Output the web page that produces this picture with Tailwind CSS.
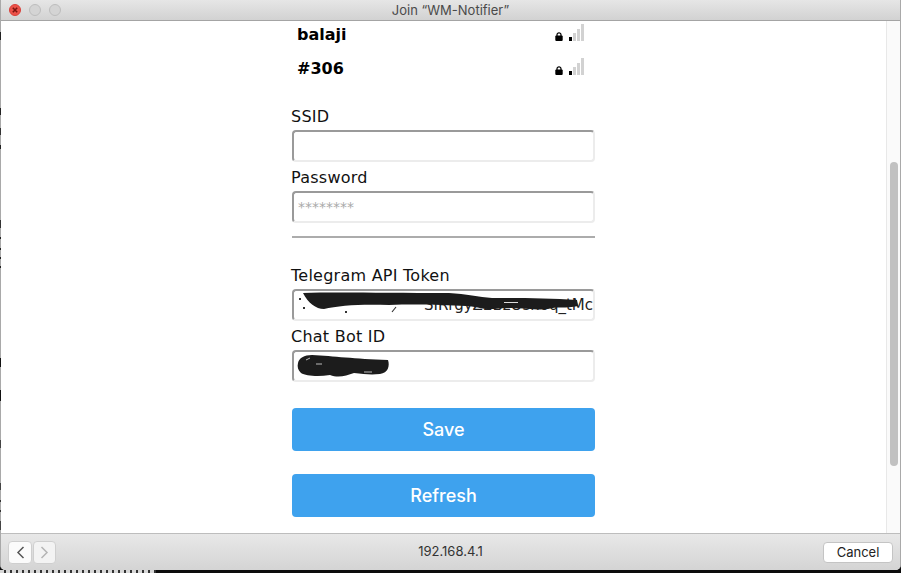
<!DOCTYPE html>
<html>
<head>
<meta charset="utf-8">
<script src="https://cdn.jsdelivr.net/npm/@tailwindcss/browser@4"></script>
</head>
<body class="m-0 bg-[#0c0c0c] overflow-hidden">
<div class="relative w-[901px] h-[573px] overflow-hidden font-['DejaVu_Sans',sans-serif] text-black">
  <div class="relative w-full h-[570px] flex flex-col bg-white rounded-b-[5px] overflow-hidden border-l border-r border-[#a9a9a9]">
    <header class="h-[21px] shrink-0 flex items-center relative bg-gradient-to-b from-[#e6e6e6] to-[#d2d2d2] border-b border-[#a4a4a4]">
      <div class="absolute left-[8px] top-[4px] flex gap-[8px]">
        <span class="w-[12px] h-[12px] rounded-full bg-[#ec5149] border border-[#d8403a] flex items-center justify-center">
          <svg width="6" height="6" viewBox="0 0 6 6"><path d="M0.8 0.8L5.2 5.2M5.2 0.8L0.8 5.2" stroke="#7a1410" stroke-width="1.6"/></svg>
        </span>
        <span class="w-[12px] h-[12px] rounded-full bg-[#d4d4d4] border border-[#bdbdbd]"></span>
        <span class="w-[12px] h-[12px] rounded-full bg-[#d4d4d4] border border-[#bdbdbd]"></span>
      </div>
      <div class="w-full text-center text-[13px] leading-[20px] text-[#4a4a4a] font-['Inter',sans-serif]">Join “WM-Notifier”</div>
    </header>
    <div class="flex-1 min-h-0 flex">
      <main class="flex-1 min-w-0">
        <div class="w-[303px] mx-auto mt-[-4px]">
          <div class="h-[34px] mt-px flex items-center justify-between pl-[5px] pr-[11px]">
            <span class="font-bold text-[16px]">balaji</span>
            <div class="flex items-end gap-[6px] mb-[5px]">
              <svg width="8" height="9" viewBox="0 0 8 9"><path d="M2 4V2.8a2 2 0 0 1 4 0V4" fill="none" stroke="#000" stroke-width="1.2"/><rect x="0.3" y="3.6" width="7.4" height="5.4" rx="1" fill="#000"/></svg>
              <svg width="15" height="17" viewBox="0 0 15 17"><rect x="0" y="13" width="3" height="4" fill="#000"/><rect x="4" y="9" width="3" height="8" fill="#d2d2d2"/><rect x="8" y="5" width="3" height="12" fill="#d2d2d2"/><rect x="12" y="0" width="3" height="17" fill="#d2d2d2"/></svg>
            </div>
          </div>
          <div class="h-[34px] flex items-center justify-between pl-[5px] pr-[11px]">
            <span class="font-bold text-[16px]">#306</span>
            <div class="flex items-end gap-[6px] mb-[5px]">
              <svg width="8" height="9" viewBox="0 0 8 9"><path d="M2 4V2.8a2 2 0 0 1 4 0V4" fill="none" stroke="#000" stroke-width="1.2"/><rect x="0.3" y="3.6" width="7.4" height="5.4" rx="1" fill="#000"/></svg>
              <svg width="15" height="17" viewBox="0 0 15 17"><rect x="0" y="13" width="3" height="4" fill="#000"/><rect x="4" y="9" width="3" height="8" fill="#d2d2d2"/><rect x="8" y="5" width="3" height="12" fill="#d2d2d2"/><rect x="12" y="0" width="3" height="17" fill="#d2d2d2"/></svg>
            </div>
          </div>
          <label class="block mt-[21px] -ml-px text-[16px] leading-[19px] tracking-[0.25px] text-[#111]">SSID</label>
          <div class="mt-[4px] h-[32px] rounded-[4px] border-2 border-[#ececec] border-t-[#9a9a9a] border-l-[#9a9a9a]"></div>
          <label class="block mt-[6px] -ml-px text-[16px] leading-[19px] tracking-[0.25px] text-[#111]">Password</label>
          <div class="mt-[4px] h-[32px] rounded-[4px] border-2 border-[#ececec] border-t-[#9a9a9a] border-l-[#9a9a9a] pl-[4px] flex items-center text-[14px] text-[#a9a9a9]">********</div>
          <div class="mt-[13px] h-[2px] bg-[#acacac]"></div>
          <label class="block mt-[28px] -ml-px text-[16px] leading-[19px] tracking-[0.25px] text-[#111]">Telegram API Token</label>
          <div class="relative mt-[4px] h-[32px] rounded-[4px] border-2 border-[#ececec] border-t-[#9a9a9a] border-l-[#9a9a9a] overflow-hidden flex items-center justify-end pr-0 text-[15px] text-[#222] whitespace-nowrap">SIRrgyZ2BzOsnoq_tMc
            <svg class="absolute left-0 top-0" width="299" height="28" viewBox="0 0 299 28"><path d="M9 2C40 1 90 2 155 2C172 3 185 6 198 7C225 7 255 7 283 9L284 15C272 18 262 15 254 18C240 20 225 15 200 18C190 19 180 15 172 15C150 14 125 13 95 14C70 13 45 14 30 18C22 18 14 12 9 2Z" fill="#1c1c1c"/><rect x="5" y="7" width="2" height="2" fill="#333"/><rect x="9" y="16" width="2" height="2" fill="#333"/><rect x="51" y="20" width="2" height="2" fill="#333"/><path d="M98 21L102 16" stroke="#333" stroke-width="1.2"/><rect x="210" y="11" width="14" height="1" fill="#ddd"/></svg>
          </div>
          <label class="block mt-[6px] -ml-px text-[16px] leading-[19px] tracking-[0.25px] text-[#111]">Chat Bot ID</label>
          <div class="relative mt-[4px] h-[32px] rounded-[4px] border-2 border-[#ececec] border-t-[#9a9a9a] border-l-[#9a9a9a] overflow-hidden">
            <svg class="absolute left-0 top-0" width="299" height="28" viewBox="0 0 299 28"><path d="M4 11C5 6 10 3 18 3C40 4 60 7 94 8C96 14 94 21 86 22C76 23 70 22 60 21C52 24 44 26 36 23C24 25 12 24 7 21C4 18 3 15 4 11Z" fill="#1c1c1c"/><path d="M12 8L16 6M22 12L28 12M70 20L78 20" stroke="#bbb" stroke-width="1"/></svg>
          </div>
          <button class="block w-full mt-[26px] h-[43px] rounded-[4px] bg-[#3ea2ee] text-white text-[18px] font-medium font-['Inter',sans-serif]">Save</button>
          <button class="block w-full mt-[23px] h-[43px] rounded-[4px] bg-[#3ea2ee] text-white text-[18px] font-medium font-['Inter',sans-serif]">Refresh</button>
        </div>
      </main>
      <aside class="w-[14px] shrink-0 bg-[#fafafa] border-l border-[#e8e8e8] pt-[141px] pl-[3px]">
        <div class="w-[8px] h-[304px] rounded-full bg-[#c1c1c1]"></div>
      </aside>
    </div>
    <footer class="h-[37px] shrink-0 flex items-center justify-between relative bg-gradient-to-b from-[#e8e8e8] to-[#d4d4d4] border-t border-[#bdbdbd] pl-[7px] pr-[7px]">
      <div class="flex gap-[1px]">
        <button class="w-[24px] h-[23px] rounded-[4px] bg-[#fbfbfb] border border-[#cfcfcf] flex items-center justify-center">
          <svg width="9" height="13" viewBox="0 0 9 13"><path d="M7.5 1L2 6.5L7.5 12" fill="none" stroke="#555" stroke-width="1.5"/></svg>
        </button>
        <button class="w-[23px] h-[23px] rounded-[4px] bg-[#f3f3f3] border border-[#cfcfcf] flex items-center justify-center">
          <svg width="9" height="13" viewBox="0 0 9 13"><path d="M1.5 1L7 6.5L1.5 12" fill="none" stroke="#b5b5b5" stroke-width="1.5"/></svg>
        </button>
      </div>
      <div class="absolute left-0 w-full text-center text-[13px] text-[#333] font-['Inter',sans-serif]">192.168.4.1</div>
      <button class="relative w-[70px] h-[21px] rounded-[4px] bg-white border border-[#c4c4c4] text-[13px] leading-[19px] text-[#222] font-['Inter',sans-serif]">Cancel</button>
    </footer>
  </div>
  <div class="absolute left-0 top-[32px] w-px h-[8px] bg-[#222]"></div>
  <div class="absolute left-0 top-[108px] w-px h-[7px] bg-[#222]"></div>
  <div class="absolute left-0 top-[128px] w-px h-[7px] bg-[#333]"></div>
  <div class="absolute left-0 top-[145px] w-px h-[4px] bg-[#222]"></div>
  <div class="absolute left-0 top-[220px] w-px h-[8px] bg-[#333]"></div>
  <div class="absolute left-0 top-[237px] w-px h-[2px] bg-[#222]"></div>
  <div class="absolute left-0 top-[248px] w-px h-[2px] bg-[#222]"></div>
  <div class="absolute left-0 top-[257px] w-px h-[2px] bg-[#222]"></div>
  <div class="absolute left-0 top-[266px] w-px h-[2px] bg-[#222]"></div>
  <div class="absolute left-0 top-[358px] w-px h-[9px] bg-[#111]"></div>
  <div class="absolute left-0 top-[390px] w-px h-[11px] bg-[#111]"></div>
  <div class="absolute left-0 top-[440px] w-px h-[8px] bg-[#444]"></div>
  <div class="absolute left-0 top-[483px] w-px h-[7px] bg-[#444]"></div>
  <div class="absolute left-0 top-[500px] w-px h-[2px] bg-[#333]"></div>
  <div class="absolute left-0 top-[510px] w-px h-[2px] bg-[#333]"></div>
  <div class="absolute left-0 top-[521px] w-px h-[9px] bg-[#444]"></div>
  <div class="absolute left-0 top-[570px] w-[156px] h-[3px] bg-[repeating-linear-gradient(90deg,#d8d8d8_0,#d8d8d8_4px,#333_4px,#333_6px)]"></div>
</div>
</body>
</html>
